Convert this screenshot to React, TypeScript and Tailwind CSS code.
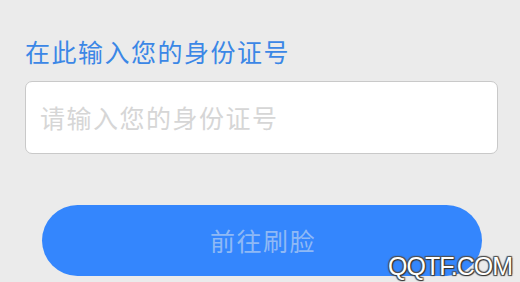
import React from "react";

export default function App() {
  return (
    <div
      className="relative w-[520px] h-[282px] overflow-hidden bg-[#ebebeb]"
      style={{ fontFamily: '"Noto Sans CJK SC", "Noto Sans", sans-serif' }}
    >
      <div className="pt-[36px] pl-[25px] pr-[22px]">
        <div className="text-[25px] leading-[30px] tracking-[1.5px] text-[#3b87e6]">
          在此输入您的身份证号
        </div>
        <div className="mt-[15px] h-[73px] w-[473px] rounded-[7px] border border-[#c9c9c9] bg-white flex items-center pl-[14px]">
          <input
            className="w-full bg-transparent outline-none text-[25px] tracking-[1.5px] text-[#333] placeholder:text-[#d6d6d6]"
            placeholder="请输入您的身份证号"
          />
        </div>
      </div>
      <div className="mt-[51px] ml-[42px] w-[440px] h-[71px] rounded-full bg-[#3486fd] flex items-center justify-center">
        <span className="text-[25px] tracking-[1.5px] pl-[2px] text-[#8fb9f5]">前往刷脸</span>
      </div>
      <div
        className="absolute right-[8px] bottom-[3px] text-[25px] leading-none tracking-[-1px] text-white"
        style={{
          fontFamily: '"Liberation Sans", Arial, sans-serif',
          textShadow:
            "0 0 1px #222, 1px 1px 1px #333, -1px -1px 1px #555, 1px -1px 1px #555, -1px 1px 1px #555",
        }}
      >
        QQTF.COM
      </div>
    </div>
  );
}
